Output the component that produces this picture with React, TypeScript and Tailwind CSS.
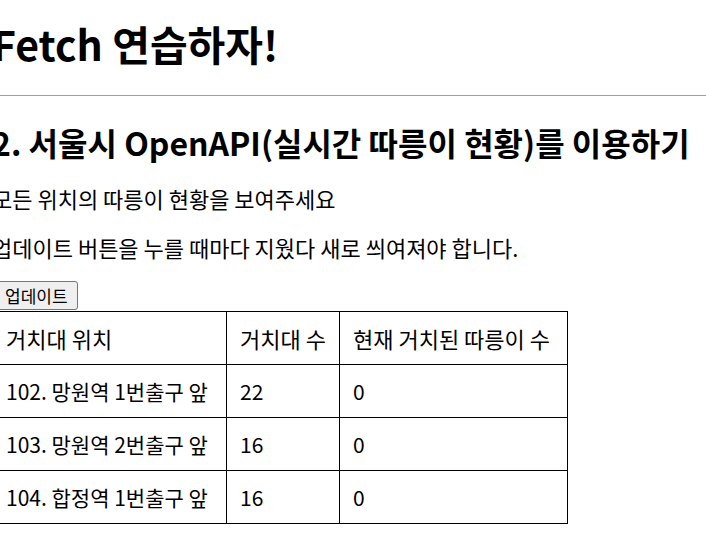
import React from 'react'

type Station = {
  name: string
  racks: number
  parked: number
}

const stations: Station[] = [
  { name: '102. 망원역 1번출구 앞', racks: 22, parked: 0 },
  { name: '103. 망원역 2번출구 앞', racks: 16, parked: 0 },
  { name: '104. 합정역 1번출구 앞', racks: 16, parked: 0 },
]

const font = "font-['Noto_Sans_CJK_KR',sans-serif]"

const cell =
  'border border-black pl-[13px] pr-[4px] py-[13px] leading-[26px] font-normal text-left align-middle whitespace-nowrap overflow-hidden'

export default function App() {
  return (
    <div className={`${font} ml-[-8px] text-black bg-white min-h-[556px] overflow-hidden`}>
      <h1 className="mt-[17px] text-[41px] font-bold leading-[52px] whitespace-nowrap">Fetch 연습하자!</h1>

      <hr className="mt-[26px] border-t border-[#a0a0a0]" />

      <h2 className="mt-[26px] text-[32px] font-bold leading-[40px] whitespace-nowrap">
        2. 서울시 OpenAPI(실시간 따릉이 현황)를 이용하기
      </h2>

      <p className="mt-[23px] text-[22px] leading-[26px] whitespace-nowrap">모든 위치의 따릉이 현황을 보여주세요</p>
      <p className="mt-[23px] text-[22px] leading-[26px] whitespace-nowrap">
        업데이트 버튼을 누를 때마다 지웠다 새로 씌여져야 합니다.
      </p>

      <button className="mt-[21px] block h-[29px] pl-[12px] pr-[9px] text-[17px] leading-[20px] bg-[#efefef] border border-[#767676] rounded-[3px]">
        업데이트
      </button>

      <table className="mt-[1px] border-collapse table-fixed w-[575px]">
        <colgroup>
          <col className="w-[234px]" />
          <col className="w-[113px]" />
          <col className="w-[228px]" />
        </colgroup>
        <tbody>
          <tr className="text-[22px]">
            <td className={cell}>거치대 위치</td>
            <td className={cell}>거치대 수</td>
            <td className={cell}>현재 거치된 따릉이 수</td>
          </tr>
          {stations.map(s => (
            <tr key={s.name} className="text-[21px]">
              <td className={cell}>{s.name}</td>
              <td className={cell}>{s.racks}</td>
              <td className={cell}>{s.parked}</td>
            </tr>
          ))}
        </tbody>
      </table>
    </div>
  )
}
